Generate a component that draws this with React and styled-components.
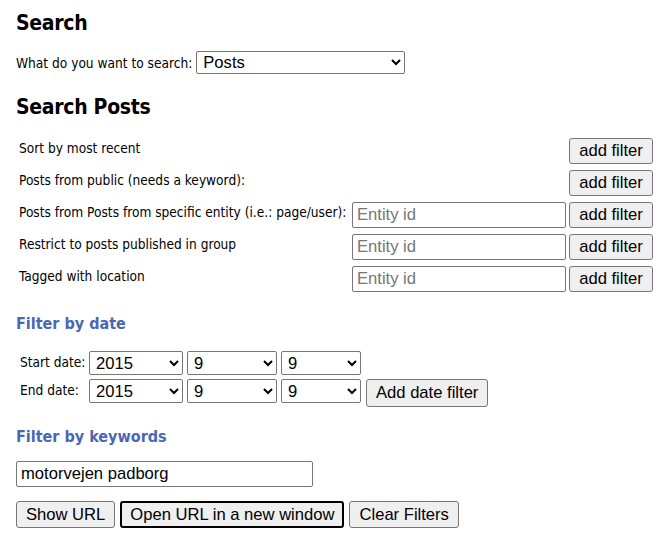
import React from "react";
import styled, { createGlobalStyle } from "styled-components";

const Global = createGlobalStyle`
  html, body { margin: 0; padding: 0; background: #fff; }
  body { font-family: "DejaVu Sans Condensed", "DejaVu Sans", sans-serif; font-stretch: condensed; color: #000; }
`;

const Page = styled.div`
  padding: 10px 16px 0 16px;
  width: 638px;
`;

const Title = styled.h1`
  margin: 0;
  font-family: "DejaVu Sans Condensed", "DejaVu Sans", sans-serif;
  font-stretch: condensed;
  font-weight: bold;
  font-size: 21px;
  line-height: 26px;
  letter-spacing: -0.3px;
`;

const TypeRow = styled.div`
  display: flex;
  align-items: center;
  gap: 4px;
  margin: 15px 0 20px;
`;

const Label = styled.span`
  font-size: 13.6px;
  line-height: 16px;
`;

const Select = styled.select`
  font-family: "Liberation Sans", Arial, sans-serif;
  font-size: 16.6px;
  color: #000;
  background: #fff;
  border: 1px solid #767676;
  border-radius: 2px;
  box-sizing: border-box;
  height: ${(p) => p.$h || 24}px;
  width: ${(p) => p.$w}px;
  padding: 0 2px;
  margin: 0;
`;

const FilterGrid = styled.div`
  display: grid;
  grid-template-columns: 330px 214px 84px;
  column-gap: 3px;
  row-gap: 6px;
  margin: 18px 0 0 3px;
`;

const CellLabel = styled.div`
  font-size: 13.6px;
  line-height: 16px;
  padding-top: ${(p) => p.$pt ?? 2}px;
`;

const TextInput = styled.input`
  font-family: "Liberation Sans", Arial, sans-serif;
  font-size: 16.6px;
  color: #000;
  border: 1px solid #767676;
  border-radius: 2px;
  height: 26px;
  box-sizing: border-box;
  width: ${(p) => p.$w}px;
  padding: 0 4px;
  margin: 0;
  &::placeholder { color: #767676; }
`;

const Button = styled.button`
  font-family: "Liberation Sans", Arial, sans-serif;
  font-size: 16.6px;
  color: #000;
  background: #efefef;
  border: ${(p) => (p.$focus ? "2px solid #000" : "1px solid #767676")};
  border-radius: 3px;
  height: ${(p) => p.$h || 26}px;
  box-sizing: border-box;
  padding: 0 ${(p) => (p.$focus ? 8 : 9)}px;
  margin: 0 0 0 ${(p) => p.$ml || 0}px;
  white-space: nowrap;
`;

const SubTitle = styled.h3`
  margin: 0;
  font-family: "DejaVu Sans Condensed", "DejaVu Sans", sans-serif;
  font-stretch: condensed;
  font-weight: bold;
  font-size: 16px;
  line-height: 20px;
  color: #4a67b5;
`;

const DateSection = styled.div`
  margin-top: 22px;
`;

const DateGrid = styled.div`
  display: grid;
  grid-template-columns: 69px auto;
  row-gap: 4px;
  margin: 17px 0 0 4px;
`;

const DateControls = styled.div`
  display: flex;
  align-items: flex-start;
  gap: 4px;
`;

const KeywordSection = styled.div`
  margin-top: 20px;
`;

const KeywordInput = styled(TextInput)`
  margin-top: 14px;
  display: block;
`;

const Actions = styled.div`
  display: flex;
  gap: 5px;
  margin-top: 14px;
`;

const filters = [
  { label: "Sort by most recent", input: false },
  { label: "Posts from public (needs a keyword):", input: false },
  { label: "Posts from Posts from specific entity (i.e.: page/user):", input: true },
  { label: "Restrict to posts published in group", input: true },
  { label: "Tagged with location", input: true },
];

function DateRow({ label, withButton }) {
  return (
    <>
      <CellLabel $pt={3}>{label}</CellLabel>
      <DateControls>
        <Select $w={94} defaultValue="2015"><option>2015</option></Select>
        <Select $w={90} defaultValue="9"><option>9</option></Select>
        <Select $w={80} defaultValue="9"><option>9</option></Select>
        {withButton && <Button $h={28} $ml={1}>Add date filter</Button>}
      </DateControls>
    </>
  );
}

export default function App() {
  return (
    <Page>
      <Global />
      <Title>Search</Title>
      <TypeRow>
        <Label>What do you want to search:</Label>
        <Select $w={209} $h={23} defaultValue="Posts">
          <option>Posts</option>
        </Select>
      </TypeRow>
      <Title>Search Posts</Title>
      <FilterGrid>
        {filters.map((f) => (
          <React.Fragment key={f.label}>
            <CellLabel>{f.label}</CellLabel>
            <div>{f.input && <TextInput $w={214} placeholder="Entity id" />}</div>
            <Button>add filter</Button>
          </React.Fragment>
        ))}
      </FilterGrid>
      <DateSection>
        <SubTitle>Filter by date</SubTitle>
        <DateGrid>
          <DateRow label="Start date:" />
          <DateRow label="End date:" withButton />
        </DateGrid>
      </DateSection>
      <KeywordSection>
        <SubTitle>Filter by keywords</SubTitle>
        <KeywordInput $w={297} defaultValue="motorvejen padborg" />
      </KeywordSection>
      <Actions>
        <Button $h={27}>Show URL</Button>
        <Button $h={27} $focus>Open URL in a new window</Button>
        <Button $h={27}>Clear Filters</Button>
      </Actions>
    </Page>
  );
}
